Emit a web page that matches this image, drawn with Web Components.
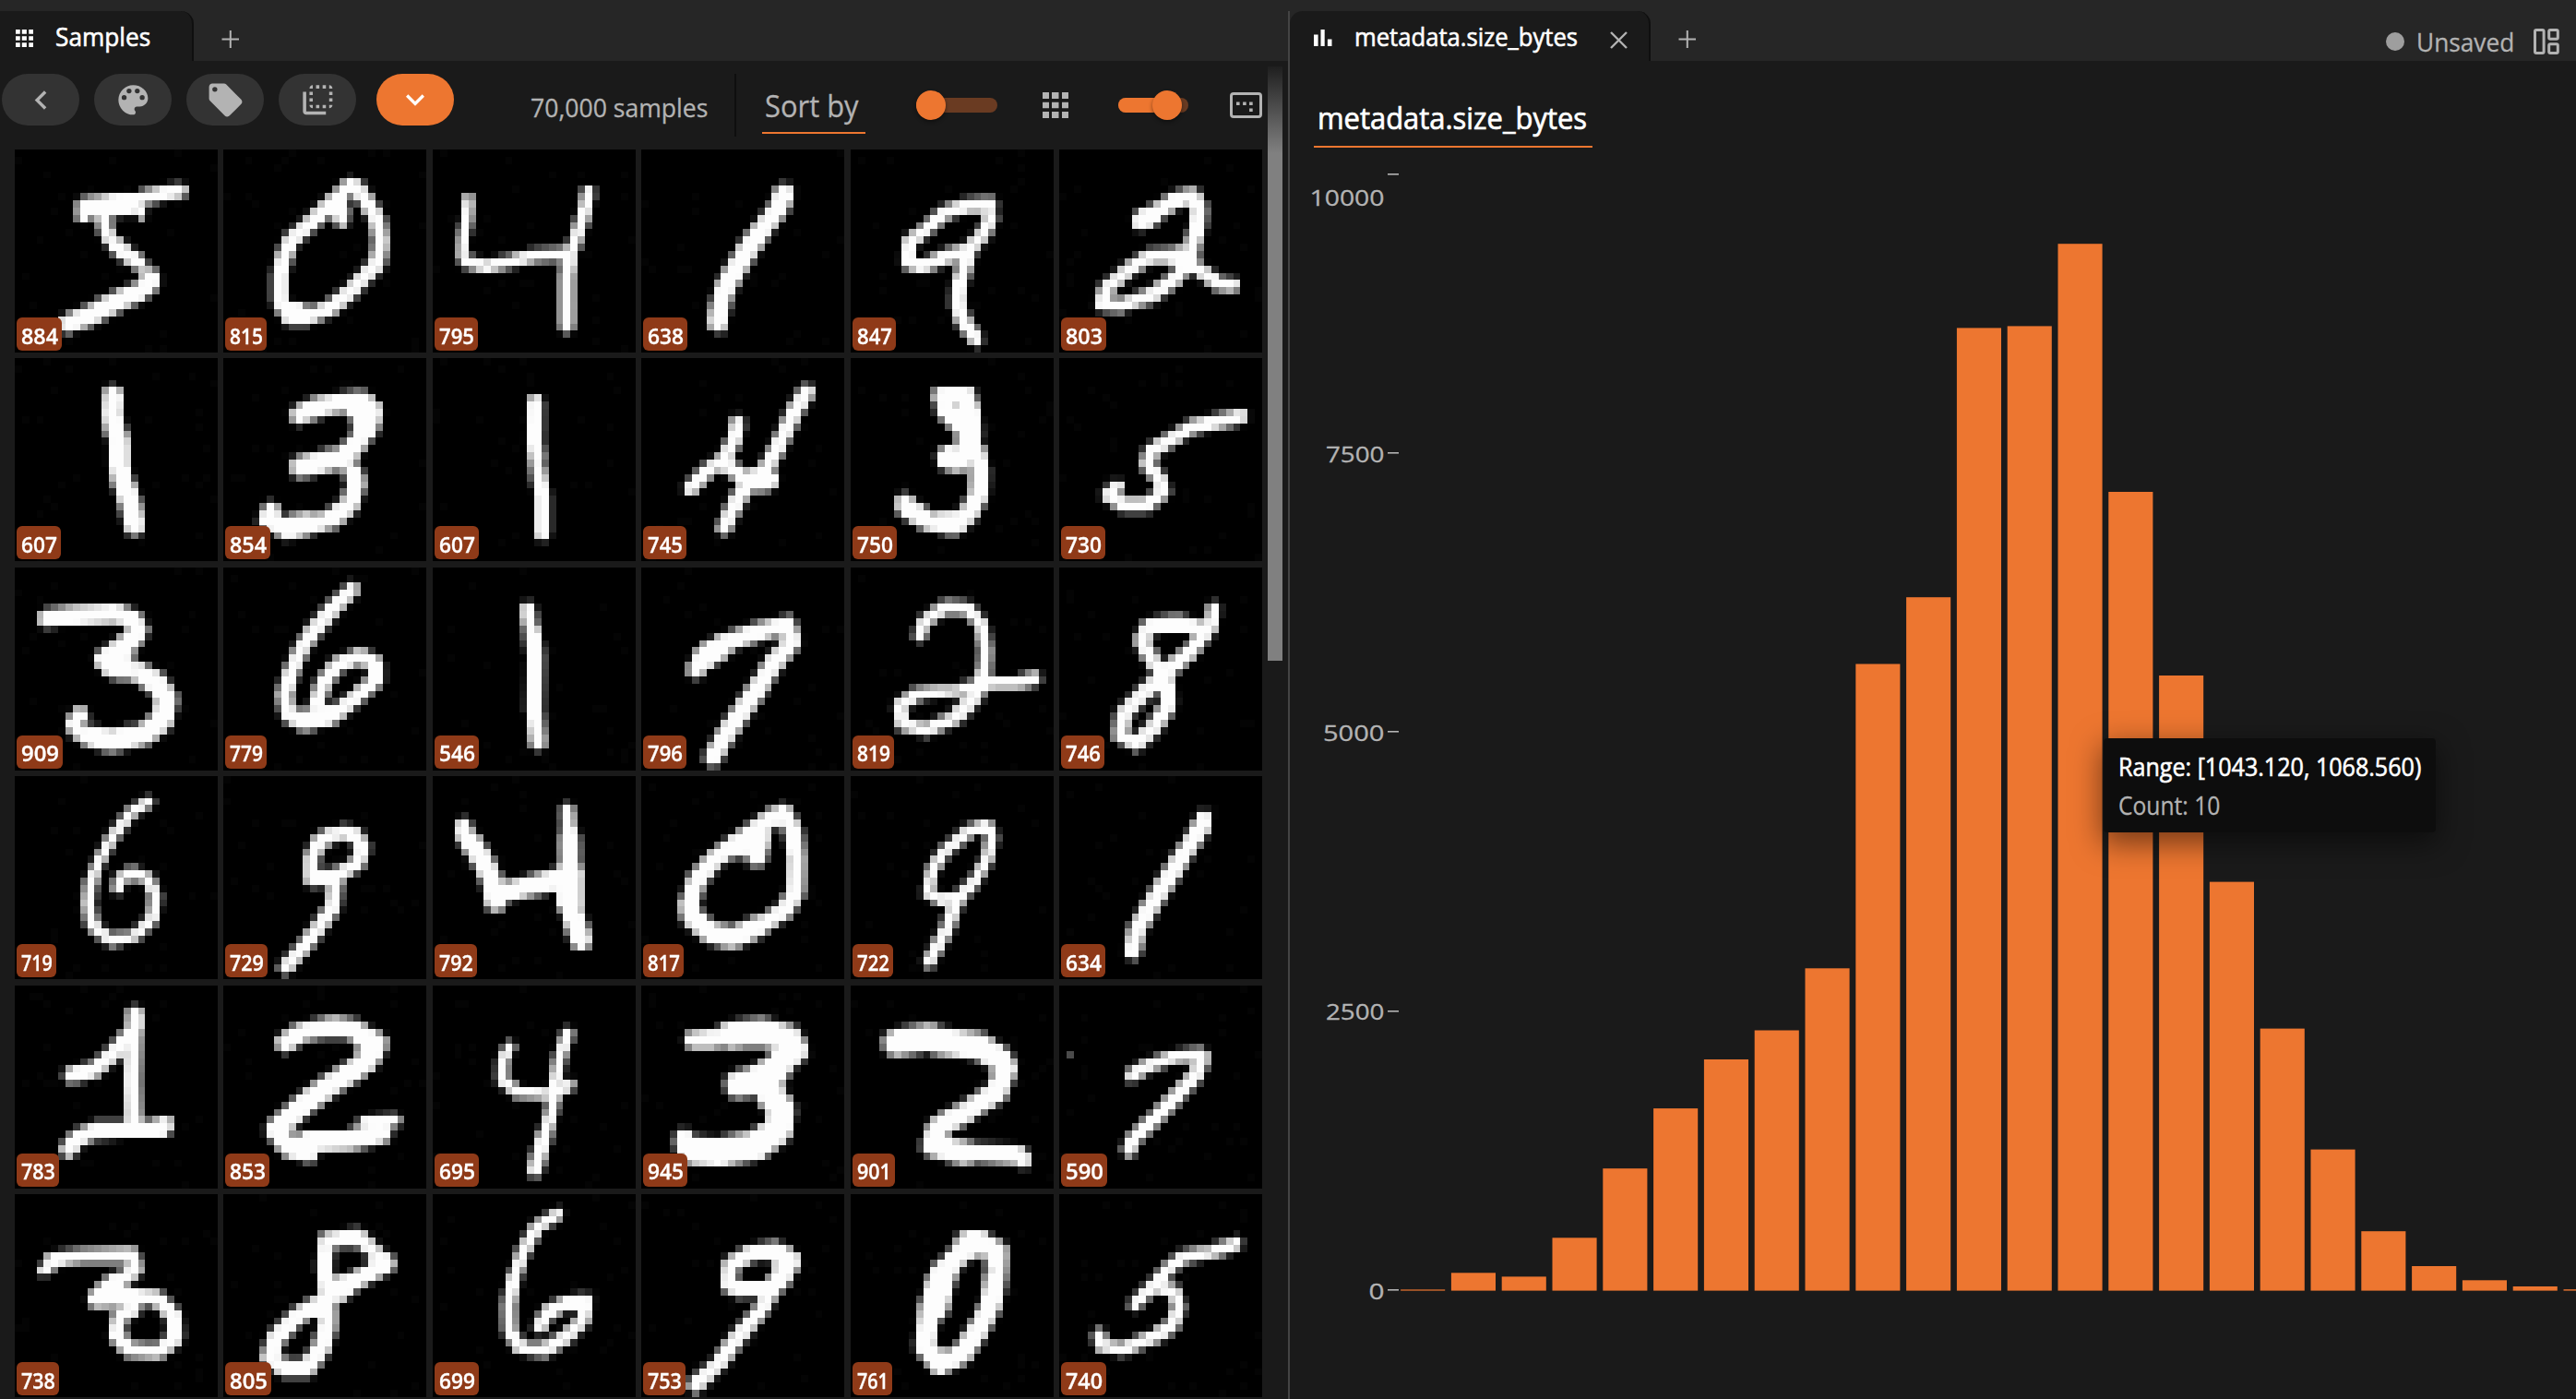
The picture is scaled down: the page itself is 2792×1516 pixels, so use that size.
<!DOCTYPE html>
<html lang="en">
<head>
<meta charset="utf-8">
<title>Samples</title>
<style>
html,body{margin:0;height:100%;background:#1a1a1a;overflow:hidden}
body{font-family:"Open Sans","Noto Sans",sans-serif;color:#fff}
</style>
</head>
<body>
<app-shell></app-shell>
<script>
const define = (name, html, setup) => customElements.define(name, class extends HTMLElement {
  connectedCallback() {
    if (this.shadowRoot) return;
    const t = document.createElement('template');
    t.innerHTML = html;
    this.attachShadow({mode: 'open'}).append(t.content.cloneNode(true));
    if (setup) setup(this, this.shadowRoot);
  }
});

/* One line of text set to an exact width. */
define('fit-text', `<style>:host{display:block;flex:none;white-space:nowrap;line-height:1}
span{display:inline-block;transform-origin:0 50%;line-height:1;vertical-align:top}</style><span></span>`, (el, root) => {
  const s = root.querySelector('span');
  s.textContent = el.getAttribute('text');
  s.style.fontSize = el.getAttribute('size') + 'px';
  el.style.fontSize = el.getAttribute('size') + 'px';
  const w = +el.getAttribute('w');
  el.style.width = w + 'px';
  s.style.transform = `scaleX(${w / s.offsetWidth})`;
});

const ICONS = {
  left: '<path d="M15.41 7.41 14 6l-6 6 6 6 1.41-1.41L10.83 12z"/>',
  down: '<path d="M16.59 8.59 12 13.17 7.41 8.59 6 10l6 6 6-6z"/>',
  palette: '<path d="M12 3a9 9 0 0 0 0 18c.83 0 1.5-.67 1.5-1.5 0-.39-.15-.74-.39-1.01-.23-.26-.38-.61-.38-.99 0-.83.67-1.5 1.5-1.5H16c2.76 0 5-2.24 5-5 0-4.42-4.03-8-9-8zm-5.5 9a1.5 1.5 0 1 1 0-3 1.5 1.5 0 0 1 0 3zm3-4a1.5 1.5 0 1 1 0-3 1.5 1.5 0 0 1 0 3zm5 0a1.5 1.5 0 1 1 0-3 1.5 1.5 0 0 1 0 3zm3 4a1.5 1.5 0 1 1 0-3 1.5 1.5 0 0 1 0 3z"/>',
  tag: '<path d="m21.41 11.58-9-9C12.05 2.22 11.55 2 11 2H4c-1.1 0-2 .9-2 2v7c0 .55.22 1.05.59 1.42l9 9c.36.36.86.58 1.41.58s1.05-.22 1.41-.59l7-7c.37-.36.59-.86.59-1.41s-.23-1.06-.59-1.42zM5.5 7a1.5 1.5 0 1 1 0-3 1.5 1.5 0 0 1 0 3z"/>',
  flip: '<path d="M9 7H7v2h2V7zm0 4H7v2h2v-2zm0-8c-1.11 0-2 .9-2 2h2V3zm4 12h-2v2h2v-2zm6-12v2h2c0-1.1-.9-2-2-2zm-6 0h-2v2h2V3zM9 17v-2H7c0 1.1.89 2 2 2zm10-4h2v-2h-2v2zm0-4h2V7h-2v2zm0 8c1.1 0 2-.9 2-2h-2v2zM5 7H3v12c0 1.1.89 2 2 2h12v-2H5V7zm10-2h2V3h-2v2zm0 12h2v-2h-2v2z"/>',
  apps: '<path d="M0 0h7v7H0zM10 0h7.5v7H10zM21 0h7v7h-7zM0 10.7h7v6.6H0zM10 10.7h7.5v6.6H10zM21 10.7h7v6.6h-7zM0 21h7v7H0zM10 21h7.5v7H10zM21 21h7v7h-7z"/>',
  chart: '<path d="M0 5.6h4.6v13.1H0zM7.5 0h4.2v18.7H7.5zM14.9 10.4h4.6v8.3h-4.6z"/>',
  plus: '<path d="M8.8 0h2v8.5H19v2h-8.2V19h-2v-8.5H.5v-2h8.3z"/>',
  close: '<path d="M1 1 18 18M18 1 1 18" stroke="currentColor" stroke-width="2.4"/>',
  aspect: '<rect x="1.5" y="1.5" width="32" height="25" rx="2.5" fill="none" stroke="currentColor" stroke-width="3"/><path d="M7 10.4h3.6v3.6H7zM14.1 10.4h3.6v3.6h-3.6zM21.1 10.4h3.6v3.6h-3.6zM21.1 17.4h3.6v3.6h-3.6z"/>',
  layout: '<g fill="none" stroke="currentColor" stroke-width="3"><rect x="1.5" y="1.5" width="9.6" height="25" rx="1.5"/><rect x="16.7" y="1.5" width="9.6" height="9.8" rx="1.5"/><rect x="16.7" y="16.7" width="9.6" height="9.8" rx="1.5"/></g>'
};
/* name, box (view box) and drawn width/height */
define('app-icon', `<style>:host{display:block;flex:none}svg{display:block;fill:currentColor}</style><svg></svg>`, (el, root) => {
  const s = root.querySelector('svg');
  const box = (el.getAttribute('box') || '24 24').split(' ');
  s.setAttribute('viewBox', `0 0 ${box.join(' ')}`);
  s.setAttribute('width', el.getAttribute('w') || box[0]);
  s.setAttribute('height', el.getAttribute('h') || el.getAttribute('w') || box[1]);
  s.innerHTML = ICONS[el.getAttribute('name')];
});

define('pill-button', `<style>:host{display:flex;flex:none;box-sizing:border-box;width:84px;height:56px;border-radius:28px;background:#333;color:#b3b3b3;align-items:center;justify-content:center}
:host([primary]){background:#ed7630;color:#fff}</style><slot></slot>`);

define('range-slider', `<style>:host{display:flex;flex:none;height:32px;align-items:center}
.rail{flex:1;height:16px;border-radius:8px;background:#6a3b22;display:flex;align-items:center}
.fill{height:16px;border-radius:8px 0 0 8px;background:#ed7630}
.thumb{flex:none;width:32px;height:32px;border-radius:50%;background:#ed7630;margin-left:-16px;box-shadow:0 2px 4px rgba(0,0,0,.45)}</style>
<div class="rail"><div class="fill"></div><div class="thumb"></div></div>`, (el, root) => {
  el.style.width = el.getAttribute('w') + 'px';
  root.querySelector('.fill').style.width = el.getAttribute('value') + 'px';
});

define('panel-tab', `<style>:host{display:flex;flex:none;box-sizing:border-box;height:54px;background:#1a1a1a;border-right:2px solid #0f0f0f;border-radius:0 14px 0 0;align-items:flex-start}
:host([round]){border-radius:14px 14px 0 0}</style><slot></slot>`);

define('tab-strip', `<style>:host{display:flex;flex:none;box-sizing:border-box;height:66px;padding-top:12px;background:#262626;align-items:flex-start}</style><slot></slot>`);

/* Pen strokes of the handwritten digits: sheet origin of the 28 x 28 field, then "width: x,y ..." per stroke. */
const SX = 17.6, SY = 23.57;
const DIGITS = [
[884,49,36,36,'2.1:450,168 400,178 340,195 260,208;3.1:192,225 260,218 335,212;1.4:340,220 345,258;1.7:200,240 200,258;2:252,240 256,290 270,335;2.3:270,335 305,375 350,415;3:366,440 362,480;2.8:360,485 300,520 230,568 150,608'],
[815,45,542,36,'2.2:857,142 810,205 755,275 705,335 688,390 680,440 680,530 705,582 750,580 795,555 845,505 885,450 915,405 925,340 915,260 890,205 857,145;3:815,205 825,240;1.8:830,240 830,280;2.8:690,565 740,565'],
[795,47,1051,36,'1.6:1139,185 1135,260 1125,330 1123,395;1.8:1123,395 1180,415 1240,400 1300,380 1385,372;1.8:1430,160 1420,240 1405,300 1390,370;2.2:1385,370 1377,450 1377,627'],
[638,48,11,36,'2.8:364,160 345,225 300,305 265,370 238,430 212,495 200,560 194,622'],
[847,47,517,36,'2:868,215 800,218 745,240 700,295 660,335 656,400 690,415 750,385 800,365 840,310 862,240;2.1:805,365 792,420 780,480 778,540 790,595 828,665'],
[803,49,1026,36,'2.3:1210,280 1255,245 1300,205 1350,185 1366,225 1362,290 1350,345 1345,400;2.8:1215,272 1265,245;2:1345,400 1300,465 1245,515 1180,540 1130,535 1140,490 1190,430 1250,382 1320,378 1365,425 1410,470 1460,478;3:1310,385 1335,405'],
[607,48,36,714,'2.8:276,812 273,900 285,980;2.9:290,960 290,1060 300,1140;3:300,1120 318,1190 330,1278'],
[854,49,542,714,'2.7:712,905 780,870 880,850 905,890;3.7:850,870 897,890 880,975;3:880,975 830,1040 712,1070;2.7:850,1060 866,1120 850,1190 800,1240 700,1275 650,1240 665,1195;3:690,1255 760,1250'],
[607,48,1051,714,'2.2:1300,838 1299,990 1307,1060;2.1:1305,1060 1317,1160 1317,1302'],
[745,47,11,714,'2:247,908 238,980 215,1040 170,1080 123,1150;2.3:210,1055 260,1100 340,1110;2.2:420,810 380,895 345,1000 310,1080 265,1130 235,1200 207,1280;3:270,1115 332,1112'],
[750,48,517,714,'2.5:722,840 815,838;2.6:735,865 790,940;3.6:800,855 805,960 800,1030;3.6:735,1035 790,1045;2.8:820,1000 830,1080 828,1160 805,1215 770,1255 700,1240 655,1205 645,1175;3:730,1250 785,1250'],
[730,48,1026,714,'2:1480,900 1410,920 1345,940 1300,975 1250,1015 1240,1060 1270,1105 1278,1150 1240,1190 1180,1192 1145,1160 1175,1123'],
[909,50,36,15,'2.6:98,180 180,170 280,165 340,190;2.9:345,195 320,250 280,290 240,325;3.6:255,325 325,345;3.1:330,350 380,390 405,440 395,510 350,555 270,578 200,560;2.4:195,560 180,520 204,480'],
[779,45,542,15,'2.2:864,72 810,145 765,215 730,285 705,360 690,430 700,495 750,515 815,490 870,430 912,380 912,325 875,302 815,335 785,390 765,480;2.8:715,515 815,490'],
[546,48,1051,15,'2.1:1281,136 1288,210;2.3:1292,205 1300,300 1298,480 1308,603'],
[796,47,11,15,'2.5:135,358 175,285 235,250 300,222 365,200 378,255 340,320;2.7:345,300 300,395 262,470 220,550 178,648;3.2:150,322 220,262'],
[819,45,517,15,'1.9:682,248 695,190 745,145 800,148 835,200 845,290 840,370;2.2:842,355 820,435 765,510;1.9:765,510 700,543 643,525 637,465 680,425 780,412 860,390 920,390 975,372'],
[746,47,1026,15,'1.8:1402,136 1395,215;2.2:1395,200 1345,290 1290,350 1230,425 1182,490 1175,560 1215,588 1260,525 1290,465 1288,390 1250,310 1225,250 1245,207 1310,195 1380,212'],
[719,43,36,693,'1.6:370,770 315,815 275,885 243,965 222,1030;1.9:222,1020 215,1110 225,1185;1.7:225,1180 270,1225 325,1212 372,1155 378,1080 358,1022 320,1008 290,1030 285,1068'],
[729,46,542,693,'2.1:820,874 775,905 757,960 757,1028 810,1020 868,980 881,925 863,884 820,874;2.1:815,1015 808,1120 770,1190 730,1260 685,1326'],
[792,46,1051,693,'2.4:1123,840 1130,905;2.9:1135,890 1170,960 1195,1030 1205,1125;3:1200,1080 1270,1055 1370,1025;2:1378,790 1382,885;2.9:1383,870 1385,990;3.8:1384,980 1384,1130;3:1385,1120 1417,1246'],
[817,44,11,693,'2.5:350,795 380,870 388,960 386,1070 360,1130 300,1180;3:305,1175 230,1218 175,1200 135,1150 125,1100;2.6:125,1120 145,1030 190,960 260,895 345,815;3.2:230,930 315,885;3:295,880 290,978'],
[722,44,517,693,'1.7:852,850 805,870 750,930 715,1000 704,1073 735,1095 780,1085 820,1030 850,960 860,890 852,850;1.9:780,1080 750,1190 702,1309'],
[634,48,1026,693,'2.2:1378,812 1375,865;2.5:1380,838 1320,965 1265,1080 1215,1190 1202,1281'],
[783,46,36,21,'2.5:327,94 330,165;2.4:325,155 322,330 325,485;2.2:318,168 270,250 230,295 160,315;2:416,464 370,488;2.4:408,486 300,490 230,492 185,520 158,566'],
[853,48,542,21,'2.7:678,216 730,175 810,155 880,170;3.4:865,180 912,210 882,285;3.2:885,275 800,345 735,410 690,465;3:690,455 670,490 700,545 765,565;3:725,530 850,520 942,495;1.8:875,465 970,460'],
[695,48,1051,21,'1.7:1243,208 1222,260 1220,330 1260,368 1340,375 1392,338;1.8:1383,165 1360,250 1348,340 1340,430 1320,525;2.1:1322,505 1296,638'],
[945,48,11,21,'2.6:122,200 205,195;3.7:205,187 300,172 370,195 385,230 340,280 300,330 225,347;4.2:280,335 355,295;4:310,350 350,420 345,490 290,540 200,565 110,555;2.6:115,495 115,555'],
[901,46,517,21,'3.8:605,208 730,188;3.7:705,195 830,220 885,265;3:875,235 895,290 870,370 800,430 732,475;3.2:735,465 715,540 810,572;2.6:790,560 925,572 942,596'],
[590,50,1026,21,'1.9:1192,320 1240,285 1300,255 1380,245;2.1:1378,243 1360,310 1310,380 1260,450 1205,520 1191,568'],
[738,46,36,702,'1.8:97,955 145,915;2.1:115,915 200,902 320,895 330,945 282,990;2.8:290,975 235,1042 330,1035;2.2:310,1030 385,1042 422,1095 425,1170 385,1215 315,1208 283,1160 290,1100 335,1065'],
[805,50,542,702,'2.5:790,1045 720,1100 670,1170 655,1235 690,1270 745,1270 780,1205 795,1130 795,1045;2.2:795,1055 788,940 792,852 870,842 915,895;2.8:905,905 948,937;2.7:940,932 880,970 808,1025;3.3:795,1015 845,1000'],
[699,48,1051,702,'1.8:1363,760 1305,808 1270,890 1250,975;2:1250,965 1236,1060 1238,1150 1265,1200 1325,1208 1378,1165 1416,1110 1423,1052 1380,1054 1330,1085 1305,1144'],
[753,46,11,702,'2.3:385,925 340,884 280,892 228,932 225,998 250,1013 320,1005 355,975;2.9:330,890 372,920 340,1000;2.2:338,990 305,1070 250,1160 200,1250 132,1334'],
[761,43,517,702,'3:820,856 770,910 728,990 707,1080 698,1200 735,1256 787,1220 828,1140 858,1060 870,960 873,885 820,856;3.6:780,862 850,862;3.6:745,935 720,1100'],
[740,49,1026,702,'1.9:1466,858 1400,888 1330,905 1290,945 1260,995 1202,1070;1.9:1258,1000 1305,1018 1316,1070 1300,1130 1260,1165 1180,1205 1130,1195 1121,1148']
];

/* Shortens a polyline so that its round caps end near the given end points. */
function trim(points, width) {
  const cut = (p) => {
    const [a, b] = p, dx = b[0] - a[0], dy = b[1] - a[1], len = Math.hypot(dx, dy);
    const k = Math.min(width * .33, len * .42) / len;
    p[0] = [a[0] + dx * k, a[1] + dy * k];
    return p;
  };
  return cut(cut(points).reverse());
}

define('sample-tile', `<style>:host{display:flex;position:relative;width:220px;height:220px;background:#000;align-items:flex-end;overflow:hidden}
canvas{display:block;width:220px;height:220px;image-rendering:pixelated}
.badge{position:absolute;left:2px;bottom:2px;box-sizing:border-box;height:36px;border-radius:6px;background:#8f3a18;font-weight:600;-webkit-text-stroke:.3px;padding:8.6px 0 0 5px}</style>
<canvas width="28" height="28"></canvas><div class="badge"></div>`, (el, root) => {
  const i = +el.getAttribute('index');
  const [label, bw, ox, oy, strokes] = DIGITS[i];
  const g = root.querySelector('canvas').getContext('2d');
  let seed = i * 7919 + 17;
  for (let k = 0; k < 30; k++) {
    seed = (seed * 1103515245 + 12345) % 2147483648;
    const p = Math.floor(seed / 65536);
    g.fillStyle = '#040404';
    g.fillRect(p % 28, Math.floor(p / 28) % 28, 1, 1);
  }
  if (label === 590) {
    g.fillStyle = '#4a4a4a';
    g.fillRect(1, 9, 1, 1);
  }
  g.strokeStyle = '#fdfdfd';
  g.lineJoin = 'round';
  g.lineCap = 'round';
  for (const s of strokes.split(';')) {
    const [w, pts] = s.split(':');
    g.lineWidth = +w;
    g.beginPath();
    const line = pts.split(' ').map(p => {
      const [x, y] = p.split(',').map(Number);
      return [(x - ox) / SX, (y - oy) / SY];
    });
    trim(line, +w).forEach((p, n) => g[n ? 'lineTo' : 'moveTo'](p[0], p[1]));
    g.stroke();
  }
  const b = root.querySelector('.badge');
  b.style.width = bw + 'px';
  b.innerHTML = `<fit-text text="${label}" size="23" w="${bw - 9.5}"></fit-text>`;
});

define('sample-grid', `<style>:host{display:grid;grid-template-columns:repeat(6,220px);gap:6.4px;padding-left:16px;flex:1;align-content:start;overflow:hidden}</style>`, (el, root) => {
  DIGITS.forEach((d, i) => {
    const t = document.createElement('sample-tile');
    t.setAttribute('index', i);
    root.append(t);
  });
});

define('samples-toolbar', `<style>:host{display:flex;flex:none;height:96px;align-items:flex-start;padding-left:2px;box-sizing:border-box;color:#b3b3b3}
.pills{display:flex;gap:16px;margin-top:14px}.pills [primary]{margin-left:6px}
.count{margin:36.7px 1.5px 0 82.5px}.rule{width:2px;height:68px;background:#0e0e0e;margin:14px 0 0 28px}
.count,.sort{-webkit-text-stroke:.3px}
.sort{box-sizing:border-box;width:112px;height:65px;margin:14px 0 0 28px;padding:18px 0 0 2.5px;border-bottom:2px solid #ed7630}</style>
<div class="pills"><pill-button><app-icon name="left" w="41"></app-icon></pill-button>
<pill-button><app-icon name="palette" w="42.7"></app-icon></pill-button>
<pill-button><app-icon name="tag" w="43"></app-icon></pill-button>
<pill-button><app-icon name="flip" w="42.7"></app-icon></pill-button>
<pill-button primary><app-icon name="down" w="40"></app-icon></pill-button></div>
<fit-text class="count" text="70,000 samples" size="27" w="192"></fit-text>
<div class="rule"></div>
<div class="sort"><fit-text text="Sort by" size="33" w="102"></fit-text></div>
<range-slider w="88" value="16" style="margin:32px 0 0 55px"></range-slider>
<app-icon name="apps" box="28 28" style="margin:34px 0 0 49px"></app-icon>
<range-slider w="76" value="53" style="margin:32px 0 0 54px"></range-slider>
<app-icon name="aspect" box="35 28" style="margin:34px 0 0 45px"></app-icon>`);

define('samples-panel', `<style>:host{display:flex;flex-direction:column;width:1396px;flex:none}
.body{display:flex;flex:1;min-height:0}.main{display:flex;flex-direction:column;width:1374px}
.bar{width:16px;height:644px;margin-top:6px;background:linear-gradient(#1f1f1f,#808080 94px)}
.icon{margin:19.5px 0 0 16.5px}.name{margin:14.3px 0 0 24.8px;-webkit-text-stroke:.6px}</style>
<tab-strip><panel-tab style="width:210px"><app-icon class="icon" name="apps" box="28 28" w="19"></app-icon><fit-text class="name" text="Samples" size="27" w="103"></fit-text></panel-tab>
<app-icon name="plus" box="20 20" style="color:#b3b3b3;margin:20.6px 0 0 30px"></app-icon></tab-strip>
<div class="body"><div class="main"><samples-toolbar></samples-toolbar><sample-grid></sample-grid></div><div class="bar"></div></div>`);

define('histogram-chart', `<style>:host{display:block;flex:1}svg{display:block}text{font-size:23.5px;fill:#b3b3b3;stroke:#b3b3b3;stroke-width:.3px}</style><svg width="1394" height="1356" viewBox="1398 160 1394 1356"></svg>`, (el, root) => {
  const base = 1398.6;
  const tops = [1397.4,1379.3,1383.4,1341.3,1266.2,1201.1,1148,1116.5,1049.3,719.5,647.2,355.4,353.4,264.2,533,732,955.6,1114.6,1245.6,1334.2,1372,1387.3,1394,1397.2];
  let s = '';
  tops.forEach((t, i) => s += `<rect x="${(1518.1 + i * 54.8).toFixed(1)}" y="${t}" width="48.1" height="${(base - t).toFixed(1)}" fill="#ed7630"/>`);
  [[188.5, 223, '10000', 81], [491, 500.5, '7500', 63.5], [793.4, 802.5, '5000', 66.5], [1095.8, 1105, '2500', 63.5], [1398, 1408, '0', 17]].forEach(([y, b, t, w]) => {
    s += `<rect x="1504" y="${Math.round(y) - 1}" width="12" height="1.6" fill="#b3b3b3"/><text x="${1500.5 - w}" y="${b}" textLength="${w}" lengthAdjust="spacingAndGlyphs">${t}</text>`;
  });
  root.querySelector('svg').innerHTML = s;
});

define('chart-tooltip', `<style>:host{display:block;position:absolute;left:882px;top:800px;width:360px;height:102px;box-sizing:border-box;padding:16.4px 0 0 15.5px;border-radius:4px;background:#0d0d0d;box-shadow:0 10px 32px 2px rgba(0,0,0,.5)}
.range{-webkit-text-stroke:.6px}.count{margin-top:14px;color:#b3b3b3;-webkit-text-stroke:.3px}</style>
<fit-text class="range" text="Range: [1043.120, 1068.560)" size="28" w="328"></fit-text>
<fit-text class="count" text="Count: 10" size="28" w="110"></fit-text>`);

define('histogram-panel', `<style>:host{display:flex;flex-direction:column;position:relative;flex:1;min-width:0}
.icon{margin:19.6px 0 0 26px}.name{margin:14.3px 0 0 24.6px;-webkit-text-stroke:.6px}.x{color:#b3b3b3;margin:21.5px 0 0 34.6px}
.plus{color:#b3b3b3;margin:20.6px 0 0 30px}.status{display:flex;margin-left:auto;padding-right:18.5px;color:#b3b3b3;align-items:flex-start;-webkit-text-stroke:.3px}
.dot{width:20px;height:20px;border-radius:50%;background:#9e9e9e;margin-top:23px}
.field{box-sizing:border-box;flex:none;width:302px;height:94px;margin-left:26px;padding:45.8px 0 0 3.6px;border-bottom:2px solid #ed7630;-webkit-text-stroke:.7px}</style>
<tab-strip><panel-tab round style="width:391px"><app-icon class="icon" name="chart" box="19.5 18.7"></app-icon><fit-text class="name" text="metadata.size_bytes" size="27" w="242"></fit-text><app-icon class="x" name="close" box="19 19"></app-icon></panel-tab>
<app-icon class="plus" name="plus" box="20 20"></app-icon>
<div class="status"><div class="dot"></div><fit-text text="Unsaved" size="28" w="106" style="margin:18.8px 0 0 13.5px"></fit-text><app-icon name="layout" box="28 28" style="margin:19px 0 0 20.5px"></app-icon></div></tab-strip>
<div class="field"><fit-text text="metadata.size_bytes" size="32.5" w="292"></fit-text></div>
<histogram-chart></histogram-chart>
<chart-tooltip></chart-tooltip>`);

define('app-shell', `<style>:host{display:flex;width:2792px;height:1516px;background:#1a1a1a;overflow:hidden}
.split{width:2px;flex:none;background:linear-gradient(#262626 12px,#444 12px)}</style>
<samples-panel></samples-panel><div class="split"></div><histogram-panel></histogram-panel>`);
</script>
</body>
</html>
